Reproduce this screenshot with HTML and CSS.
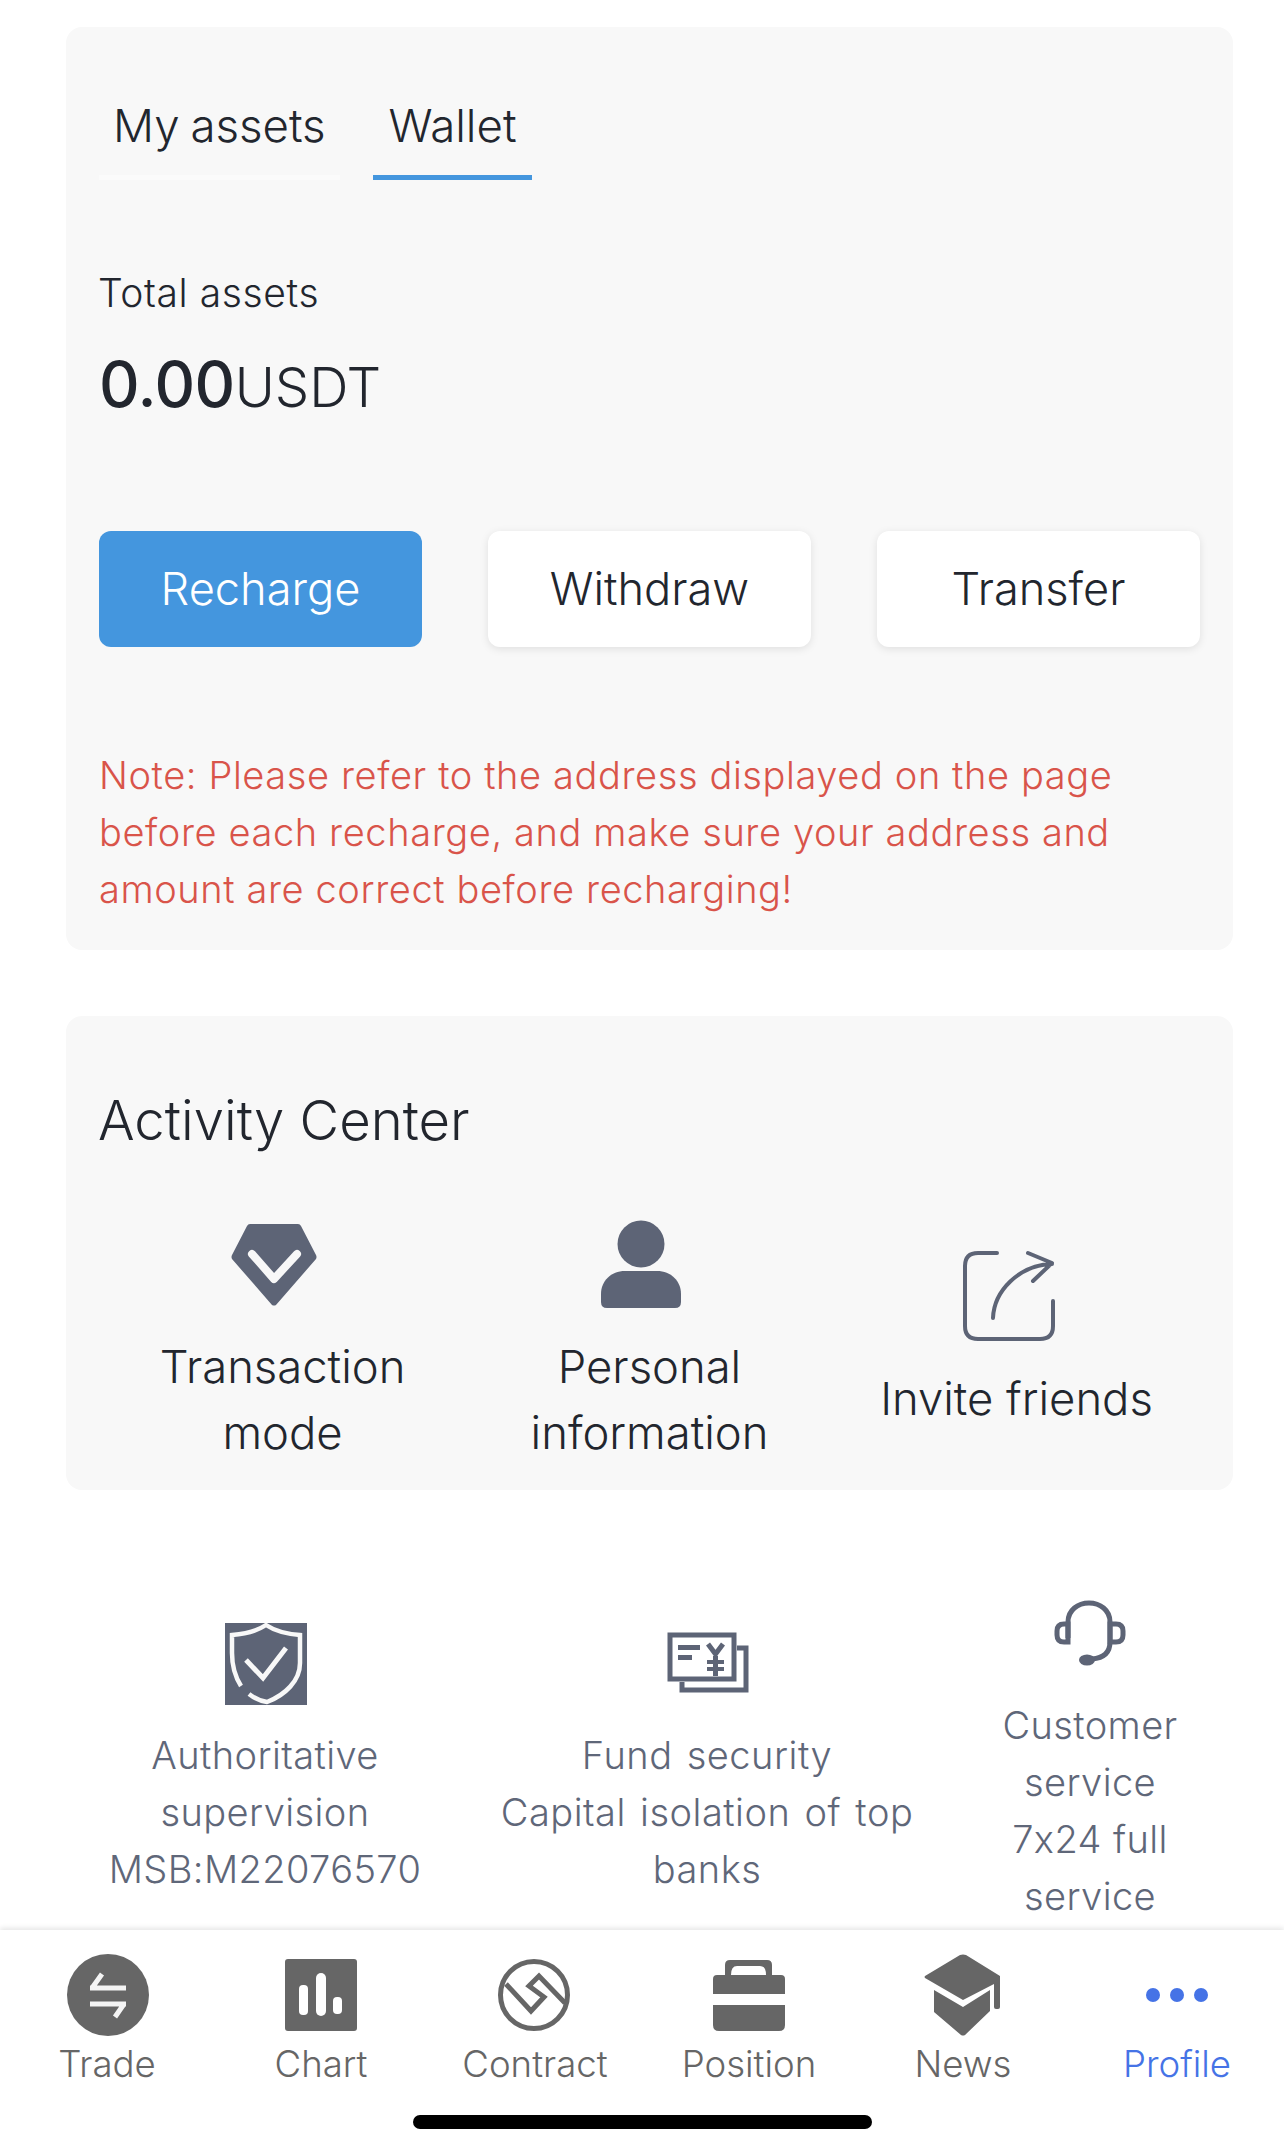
FILE: index.html
```html
<!DOCTYPE html>
<html lang="en">
<head>
<meta charset="utf-8">
<title>Profile</title>
<link rel="stylesheet" href="styles.css">
</head>
<body>
<main class="page">
  <section class="card wallet">
    <div class="tabs">
      <div class="tab">My assets</div>
      <div class="tab active">Wallet</div>
    </div>
    <div class="total-label">Total assets</div>
    <div class="total"><span class="amount">0.00</span><span class="unit">USDT</span></div>
    <div class="actions">
      <div class="btn primary">Recharge</div>
      <div class="btn">Withdraw</div>
      <div class="btn">Transfer</div>
    </div>
    <p class="note">Note: Please refer to the address displayed on the page before each recharge, and make sure your address and amount are correct before recharging!</p>
  </section>

  <section class="card activity">
    <h2 class="activity-title">Activity Center</h2>
    <div class="activity-row">
      <div class="activity-item">
        <svg class="ic-diamond" viewBox="0 0 86 83"><path d="M19 1H67Q69 1 70 3L85 32Q86 34 85 36L45 82Q43 83 41 82L1 36Q0 34 1 32L16 3Q17 1 19 1Z" fill="#5d6476"/><path d="M21 31L43 56L66 31" fill="none" stroke="#f8f8f8" stroke-width="8" stroke-linecap="round" stroke-linejoin="round"/></svg>
        <div class="activity-label">Transaction<br>mode</div>
      </div>
      <div class="activity-item">
        <svg class="ic-person" viewBox="0 0 82 88"><circle cx="41" cy="24" r="23.5" fill="#5d6476"/><path d="M25 51H57C71 51 81 61 81 74V82Q81 88 75 88H7Q1 88 1 82V74C1 61 11 51 25 51Z" fill="#5d6476"/></svg>
        <div class="activity-label">Personal<br>information</div>
      </div>
      <div class="activity-item">
        <svg class="ic-share" viewBox="0 0 94 94"><g fill="none" stroke="#5d6476" stroke-width="4" stroke-linecap="round" stroke-linejoin="round"><path d="M36 4H17Q4 4 4 17V77Q4 90 17 90H79Q92 90 92 77V52"/><path d="M32 69C33 42 58 16 91 15M67 4L91 14L72 32"/></g></svg>
        <div class="activity-label">Invite friends</div>
      </div>
    </div>
  </section>

  <section class="features">
    <div class="feature f1">
      <svg class="ic-shield" viewBox="0 0 82 82"><path d="M0 0H82V82H0Z" fill="#5d6476"/><path d="M16 63C9 52 7 42 7 30V12C20 11 32 8 41 2C50 8 62 11 75 12V40C75 58 60 72 42 79C35 78 29 75 24 71" fill="none" stroke="#f8f8f8" stroke-width="4.500"/><path d="M21 37L38 55L61 25" fill="none" stroke="#f8f8f8" stroke-width="5"/></svg>
      <div class="feature-text">Authoritative<br>supervision<br>MSB:M22076570</div>
    </div>
    <div class="feature f2">
      <svg class="ic-fund" viewBox="0 0 82 62"><g fill="none" stroke="#5d6476" stroke-width="5"><rect x="3" y="3" width="64" height="44"/><path d="M70 16H79V58H15V50"/></g><g fill="#5d6476"><rect x="11" y="13" width="22" height="5"/><rect x="11" y="23" width="14" height="5"/><rect x="40" y="28" width="17" height="4"/><rect x="40" y="35" width="17" height="4"/><rect x="46" y="24" width="5" height="20"/></g><path d="M41 12L48.500 22L56 12" fill="none" stroke="#5d6476" stroke-width="5"/></svg>
      <div class="feature-text">Fund security<br>Capital isolation of top banks</div>
    </div>
    <div class="feature f3">
      <svg class="ic-head" viewBox="0 0 72 70"><g fill="none" stroke="#5d6476" stroke-width="5"><path d="M14 38V22C14 10 24 3 35 3S56 10 56 22V42C56 52 50 58 38 59"/><path d="M14 24H10Q3 24 3 31V35Q3 42 10 42H14Z"/><path d="M56 24H62Q69 24 69 31V35Q69 42 62 42H56Z"/></g><ellipse cx="33" cy="60" rx="8" ry="5.500" fill="#5d6476"/></svg>
      <div class="feature-text">Customer service<br>7x24 full service</div>
    </div>
  </section>
</main>

<nav class="tabbar">
  <div class="tabbar-row">
    <div class="nav-item">
      <span class="nav-icon"><svg class="ic-trade" viewBox="0 0 82 82"><circle cx="41" cy="41" r="41" fill="#666"/><g fill="none" stroke="#f4f4f4" stroke-width="5"><path d="M23 34H59M25 34L35 20"/><path d="M23 50H59M57 50L48 63"/></g></svg></span>
      <span class="nav-label">Trade</span>
    </div>
    <div class="nav-item">
      <span class="nav-icon"><svg class="ic-chart" viewBox="0 0 72 72"><rect width="72" height="72" rx="3" fill="#666"/><g fill="#fff"><rect x="14" y="26" width="9" height="30" rx="4"/><rect x="31" y="14" width="10" height="43" rx="5"/><rect x="48" y="38" width="9" height="17" rx="4"/></g></svg></span>
      <span class="nav-label">Chart</span>
    </div>
    <div class="nav-item">
      <span class="nav-icon"><svg class="ic-contract" viewBox="0 0 72 72"><circle cx="36" cy="36" r="33.500" fill="none" stroke="#666" stroke-width="5"/><path d="M8 25L33 52L46 38L31 27L41 17L67 44" fill="none" stroke="#666" stroke-width="5"/></svg></span>
      <span class="nav-label">Contract</span>
    </div>
    <div class="nav-item">
      <span class="nav-icon"><svg class="ic-case" viewBox="0 0 72 72"><g fill="#666"><path d="M12 16V6Q12 1 17 1H54Q59 1 59 6V16H68Q72 16 72 20V35H0V20Q0 16 4 16ZM18 16H53Q53 7 47 7H24Q18 7 18 16Z" fill-rule="evenodd"/><path d="M0 46H72V66Q72 72 66 72H6Q0 72 0 66Z"/></g></svg></span>
      <span class="nav-label">Position</span>
    </div>
    <div class="nav-item">
      <span class="nav-icon"><svg class="ic-cap" viewBox="0 0 78 82"><g fill="#666"><path d="M36 1Q39 0 42 1L76 22V53Q76 55 74 55H72Q70 55 70 53V30L39 46L1 24Q0 23 1 22Z"/><path d="M10 36L39 53L66 36V57L41 81Q39 82 37 81L10 58Z"/></g></svg></span>
      <span class="nav-label">News</span>
    </div>
    <div class="nav-item current">
      <span class="nav-icon"><svg class="ic-dots" viewBox="0 0 62 16"><g fill="#4573e6"><circle cx="7" cy="8" r="7"/><circle cx="31" cy="8" r="7"/><circle cx="55" cy="8" r="7"/></g></svg></span>
      <span class="nav-label">Profile</span>
    </div>
  </div>
  <div class="home-indicator"></div>
</nav>
</body>
</html>
```
FILE: styles.css
```css
* { box-sizing: border-box; }
html, body { margin: 0; padding: 0; }
body {
  width: 1284px;
  height: 2154px;
  overflow: hidden;
  background: #fff;
  font-family: Inter, "Noto Sans", "Liberation Sans", sans-serif;
  font-weight: 300;
  font-feature-settings: "calt" 0;
  color: #22262e;
  display: flex;
  flex-direction: column;
}
.page { flex: 1; padding: 27px 51px 0 66px; }
.card { background: #f8f8f8; border-radius: 16px; }

.wallet { height: 923px; padding: 63px 33px 0; }
.tabs { display: flex; gap: 33px; height: 90px; }
.tab {
  width: 241px;
  height: 90px;
  padding: 5px 14px 0;
  font-size: 45.6px;
  line-height: 62px;
  word-spacing: -2px;
  border-bottom: 5px solid #fbfbfb;
  white-space: nowrap;
}
.tab.active { width: 159px; text-align: center; border-bottom-color: #4496de; padding: 5px 0 0; }
.total-label { margin-top: 90px; font-size: 39px; line-height: 46px; letter-spacing: .6px; margin-left: -1px; }
.total { margin-top: 28px; display: flex; align-items: baseline; height: 80px; line-height: 80px; }
.amount { font-size: 63px; font-weight: 500; letter-spacing: -.5px; }
.unit { font-size: 54.5px; }
.actions { margin-top: 107px; display: grid; grid-template-columns: repeat(3, 323px); gap: 66px; }
.btn {
  height: 116px;
  background: #fff;
  border-radius: 12px;
  box-shadow: 0 2px 8px rgba(0, 0, 0, .1);
  font-size: 45.2px;
  line-height: 116px;
  text-align: center;
}
.btn.primary { background: #4496de; color: #fff; box-shadow: none; }
.note { margin: 100px 0 0; color: #d9544a; font-size: 38px; line-height: 57px; letter-spacing: .6px; width: 1060px; }

.activity { margin-top: 66px; height: 474px; padding: 71px 33px 0; }
.activity-title { margin: 0; font-size: 54.4px; font-weight: 300; line-height: 66px; margin-left: -1px; }
.activity-row { display: grid; grid-template-columns: 367px 367px 367px; align-items: center; margin-top: 70px; }
.activity-item { display: flex; flex-direction: column; align-items: center; }
.activity-label { font-size: 45.4px; line-height: 66px; text-align: center; }
.ic-diamond { width: 86px; height: 83px; margin: 0 18px 28px 0; }
.ic-person { width: 82px; height: 88px; margin: -4px 18px 26px 0; }
.ic-share { width: 94px; height: 94px; margin: -8px 18px 23px 0; }

.features { margin-top: 110px; margin-left: -66px; padding-left: 40px; display: grid; grid-template-columns: 450px 434px 300px; column-gap: 0; align-items: center; }
.feature { display: flex; flex-direction: column; align-items: center; text-align: center; font-size: 38px; line-height: 57px; color: #5f6779; }
.feature-text { width: 100%; }
.f1 { margin-bottom: 4px; letter-spacing: .4px; }
.f2 { margin-top: 4px; letter-spacing: .5px; word-spacing: 3px; }
.f3 { margin-left: 32px; letter-spacing: .4px; }
.ic-shield { width: 82px; height: 82px; margin: 0 0 22px 2px; }
.ic-fund { width: 82px; height: 62px; margin: 0 0 33px 2px; }
.ic-head { width: 72px; height: 70px; margin-bottom: 27px; }

.tabbar { height: 224px; background: #fff; box-shadow: 0 -2px 5px rgba(0, 0, 0, .1); position: relative; }
.tabbar-row { display: grid; grid-template-columns: repeat(6, 214px); }
.nav-item { display: flex; flex-direction: column; align-items: center; color: #666; padding-top: 23px; }
.nav-icon { height: 84px; display: flex; align-items: center; justify-content: center; }
.nav-label { margin-top: 4px; font-size: 36.6px; line-height: 46px; }
.nav-item.current { color: #4573e6; }
.ic-trade { width: 82px; height: 82px; margin-left: 1px; }
.ic-chart, .ic-case { width: 72px; height: 72px; }
.ic-contract { width: 72px; height: 72px; margin-right: 2px; }
.ic-cap { width: 78px; height: 82px; }
.ic-dots { width: 62px; height: 16px; }
.home-indicator { position: absolute; left: 413px; top: 185px; width: 459px; height: 14px; background: #000; border-radius: 7px; }
```
